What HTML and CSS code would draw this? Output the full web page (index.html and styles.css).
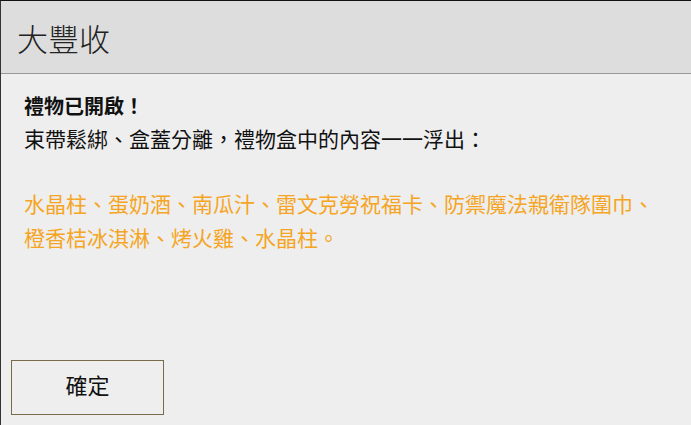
FILE: index.html
```html
<!DOCTYPE html>
<html lang="zh-Hant">
<head>
<meta charset="utf-8">
<link rel="stylesheet" href="styles.css">
</head>
<body>
<div class="dialog">
  <div class="header"><h1 class="title">大豐收</h1></div>
  <div class="content">
    <div class="message">
      <p class="lead">禮物已開啟！</p>
      <p class="desc">束帶鬆綁、盒蓋分離，禮物盒中的內容一一浮出：</p>
      <p class="items">水晶柱、蛋奶酒、南瓜汁、雷文克勞祝福卡、防禦魔法親衛隊圍巾、<br>橙香桔冰淇淋、烤火雞、水晶柱。</p>
    </div>
    <button class="ok">確定</button>
  </div>
</div>
</body>
</html>
```
FILE: styles.css
```css
html, body {
  margin: 0;
  padding: 0;
  background: #eeeeee;
}
.dialog {
  width: 691px;
  height: 425px;
  box-sizing: border-box;
  border-top: 1px solid #111;
  border-left: 1px solid #333;
  display: flex;
  flex-direction: column;
  font-family: "Noto Sans CJK TC", "Noto Sans", sans-serif;
  color: #111;
  background: #eeeeee;
}
.header {
  height: 72px;
  background: #dddddd;
  border-bottom: 1px solid #999;
  display: flex;
  align-items: center;
  padding-left: 16px;
}
.title {
  margin: 0;
  font-size: 31px;
  font-weight: 300;
  line-height: 1;
  color: #222;
}
.content {
  flex: 1;
  display: flex;
  flex-direction: column;
  justify-content: space-between;
  padding: 15px 0 10px 10px;
}
.message {
  padding-left: 13px;
  font-size: 21px;
  line-height: 33px;
}
.message p {
  margin: 0;
}
.lead {
  font-weight: 700;
  font-size: 20px;
}
.items {
  margin-top: 31px !important;
  color: #f5a523;
  line-height: 34px;
}
.ok {
  width: 153px;
  height: 55px;
  background: #eeeeee;
  border: 1px solid #7a6a4c;
  font-family: "Noto Sans CJK TC", sans-serif;
  font-size: 22px;
  color: #111;
  padding: 0 0 8px 0;
}
```
